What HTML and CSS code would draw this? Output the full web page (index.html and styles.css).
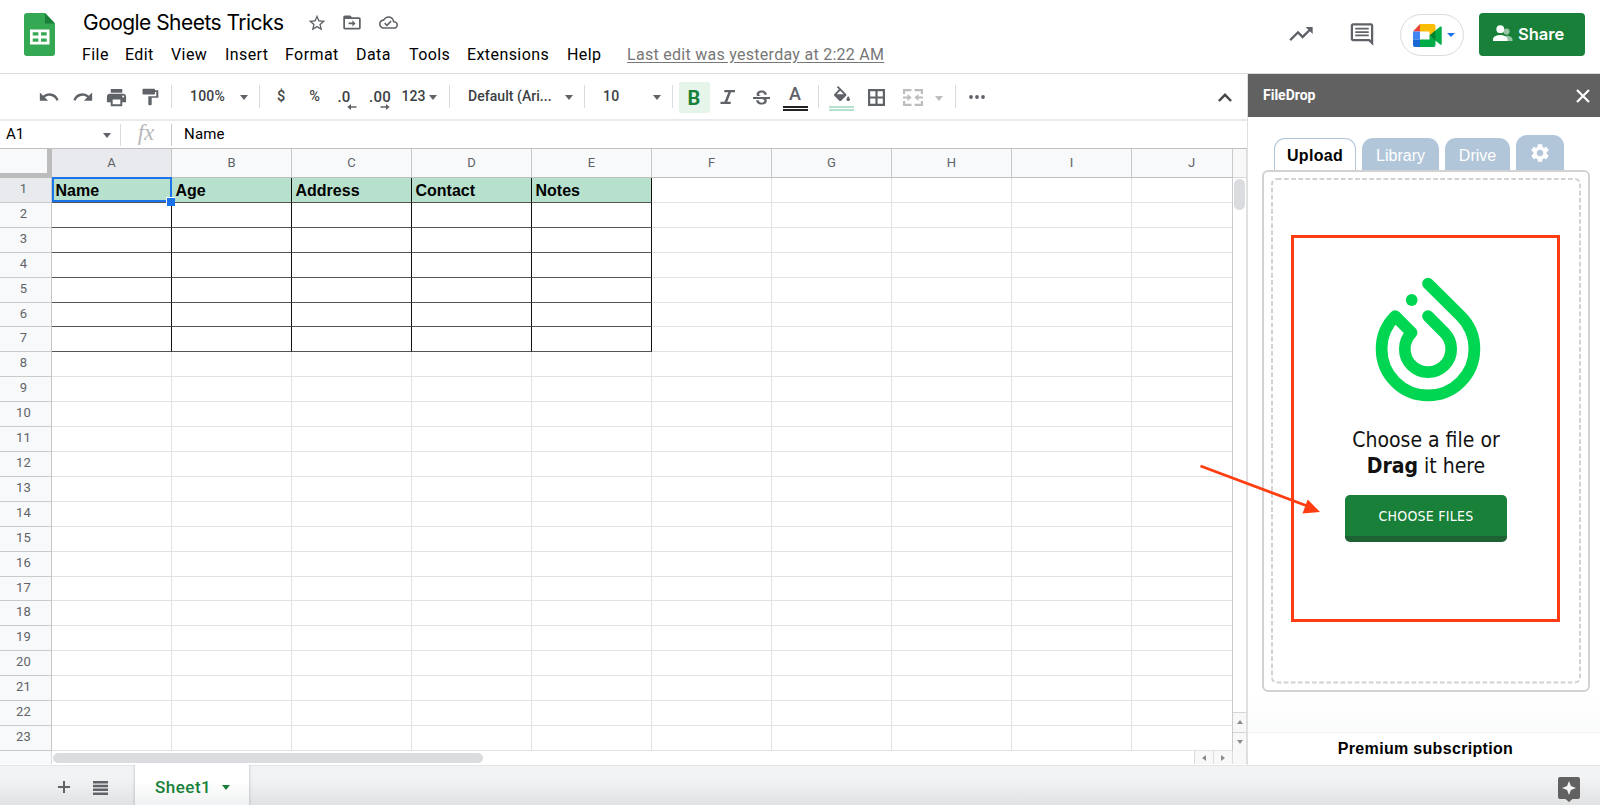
FILE: index.html
```html
<!DOCTYPE html>
<html lang="en">
<head>
<meta charset="utf-8">
<title>Google Sheets Tricks</title>
<link rel="stylesheet" href="styles.css">
</head>
<body>
<div class="app">
  <header class="top">
    <svg class="logo" viewBox="0 0 31 43" width="31" height="43">
      <path fill="#34a853" d="M3 0h18l10 10.500v29.500a3 3 0 0 1-3 3H3a3 3 0 0 1-3-3V3a3 3 0 0 1 3-3z"/>
      <path fill="#188038" d="M21 0l10 10.500H21z"/>
      <path fill="#fff" fill-rule="evenodd" d="M6 16.500h19.500v15H6zM8.700 19.200v3.400h5.700v-3.400zM17 19.200v3.400h5.700v-3.400zM8.700 25.400v3.400h5.700v-3.400zM17 25.400v3.400h5.700v-3.400z"/>
    </svg>
    <div class="titles">
      <div class="title-row">
        <span class="doc-title">Google Sheets Tricks</span>
        <svg class="star" viewBox="0 0 24 24" width="20" height="20"><path d="M22 9.240l-7.190-.62L12 2 9.190 8.630 2 9.240l5.460 4.730L5.820 21 12 17.270 18.180 21l-1.630-7.030L22 9.240zM12 15.400l-3.760 2.270 1-4.280-3.320-2.880 4.380-.38L12 6.100l1.710 4.040 4.380.38-3.320 2.880 1 4.280L12 15.400z"/></svg>
        <svg class="move" viewBox="0 0 24 24" width="22" height="21"><path d="M20 6h-8l-2-2H4c-1.100 0-2 .9-2 2v12c0 1.100.9 2 2 2h16c1.100 0 2-.9 2-2V8c0-1.100-.9-2-2-2zm0 12H4V8h16v10zm-7.500-1.500 3.500-3.500-3.500-3.500v2.600H8v1.800h4.500z"/></svg>
        <svg class="cloud" viewBox="0 0 24 24" width="19" height="19"><path d="M19.350 10.040C18.670 6.590 15.640 4 12 4 9.110 4 6.600 5.640 5.350 8.040 2.340 8.360 0 10.910 0 14c0 3.310 2.690 6 6 6h13c2.760 0 5-2.240 5-5 0-2.640-2.050-4.780-4.650-4.960zM19 18H6c-2.210 0-4-1.790-4-4 0-2.050 1.530-3.760 3.560-3.970l1.070-.11.5-.95C8.080 7.140 9.940 6 12 6c2.620 0 4.880 1.860 5.390 4.430l.3 1.500 1.530.11c1.560.1 2.780 1.410 2.780 2.960 0 1.650-1.350 3-3 3zm-9-3.820l-2.090-2.090L6.500 13.500 10 17l6.010-6.010-1.410-1.410z"/></svg>
      </div>
      <nav class="menu">
        <span class="m-file">File</span><span class="m-edit">Edit</span><span class="m-view">View</span><span class="m-insert">Insert</span><span class="m-format">Format</span><span class="m-data">Data</span><span class="m-tools">Tools</span><span class="m-ext">Extensions</span><span class="m-help">Help</span><span class="last-edit">Last edit was yesterday at 2:22 AM</span>
      </nav>
    </div>
    <div class="actions">
      <svg class="trend" viewBox="0 0 24 24" width="28" height="28"><path d="M16 6l2.290 2.290-4.880 4.880-4-4L2 16.590 3.410 18l6-6 4 4 6.300-6.290L22 12V6z"/></svg>
      <svg class="comment" viewBox="0 0 24 24" width="28" height="27"><path d="M21.990 4c0-1.100-.89-2-1.990-2H4c-1.100 0-2 .9-2 2v12c0 1.100.9 2 2 2h14l4 4-.01-18zM20 4v13.170L18.830 16H4V4h16zM6 12h12v1.600H6zm0-3h12v1.600H6zm0-3h12v1.600H6z"/></svg>
      <div class="meet">
        <svg viewBox="0 0 29 23" width="29" height="23">
          <path fill="#ea4335" d="M0 7.500L7 0v7.500z"/>
          <path fill="#4285f4" d="M0 7.500h7v8H0z"/>
          <path fill="#1967d2" d="M0 15.500h7V23H2a2 2 0 0 1-2-2z"/>
          <path fill="#fbbc04" d="M7 0h13.500a2 2 0 0 1 2 2v5l-6 4.500v-4H7z"/>
          <path fill="#00ac47" d="M7 15.500h9.500v-4l6 5V21a2 2 0 0 1-2 2H7z"/>
          <path fill="#00ac47" d="M22.500 6.500l4.700-3.900c.7-.5 1.500 0 1.500.8v16.400c0 .9-.9 1.300-1.500.8l-4.700-3.900-6-5.200z"/>
          <path fill="#00832d" d="M16.500 11.500l6-5v10z"/>
        </svg>
        <i class="caret blue"></i>
      </div>
      <div class="share">
        <svg viewBox="0 0 20 17" width="20" height="17">
          <g fill="#fff" opacity=".55"><circle cx="13.500" cy="6.500" r="3.100"/><path d="M13 10.500c3.500.3 6.500 1.800 6.500 4V16H14z"/></g>
          <g fill="#fff"><circle cx="7.300" cy="4.200" r="3.900"/><path d="M0 16v-1.800C0 11.200 4.800 10 7.300 10s7.200 1.200 7.200 4.200V16z"/></g>
        </svg>
        <span>Share</span>
      </div>
    </div>
  </header>

  <div class="body">
    <main class="editor">
      <div class="toolbar">
        <div class="tool"><svg viewBox="0 0 24 24" width="22" height="22"><path d="M12.500 8c-2.650 0-5.050.99-6.900 2.600L2 7v9h9l-3.620-3.620c1.390-1.160 3.160-1.880 5.120-1.880 3.540 0 6.550 2.310 7.600 5.500l2.370-.78C21.080 11.030 17.150 8 12.500 8z"/></svg></div>
        <div class="tool"><svg viewBox="0 0 24 24" width="22" height="22"><path d="M18.400 10.600C16.550 8.990 14.150 8 11.500 8c-4.650 0-8.580 3.030-9.960 7.220L3.900 16c1.050-3.190 4.050-5.500 7.600-5.500 1.950 0 3.730.72 5.120 1.880L13 16h9V7l-3.600 3.600z"/></svg></div>
        <div class="tool"><svg viewBox="0 0 24 24" width="23" height="23"><path d="M19 8H5c-1.660 0-3 1.340-3 3v6h4v4h12v-4h4v-6c0-1.660-1.340-3-3-3zm-3 11H8v-5h8v5zm3-7c-.55 0-1-.45-1-1s.45-1 1-1 1 .45 1 1-.45 1-1 1zm-1-9H6v4h12V3z"/></svg></div>
        <div class="tool"><svg viewBox="0 0 24 24" width="20" height="20"><path d="M18 4V3c0-.55-.45-1-1-1H4c-.55 0-1 .45-1 1v5c0 .55.45 1 1 1h13c.55 0 1-.45 1-1V6h1.500v5H10v10c0 .55.45 1 1 1h2c.55 0 1-.45 1-1v-8h8V4h-4z"/></svg></div>
        <div class="sep"></div>
        <div class="tool drop zoom"><span>100%</span><i class="caret"></i></div>
        <div class="sep"></div>
        <div class="tool glyph">$</div>
        <div class="tool glyph">%</div>
        <div class="tool dec"><span>.0</span><svg viewBox="0 0 10 6" width="10" height="6"><path d="M4 0v2.200h5.500v1.600H4V6L.3 3z"/></svg></div>
        <div class="tool dec wide"><span>.00</span><svg viewBox="0 0 10 6" width="10" height="6"><path d="M6 0v2.200H.5v1.600H6V6l3.700-3z"/></svg></div>
        <div class="tool num"><span>123</span><i class="caret"></i></div>
        <div class="sep"></div>
        <div class="tool drop font"><span>Default (Ari...</span><i class="caret"></i></div>
        <div class="sep"></div>
        <div class="tool drop size"><span>10</span><i class="caret"></i></div>
        <div class="sep"></div>
        <div class="tool"><b class="bold-on">B</b></div>
        <div class="tool"><svg viewBox="0 0 16 16" width="16" height="16"><path d="M4.300 1H15v2.300h-4L7.300 12.700h3.400V15H.5v-2.300h4L8.300 3.300h-4z"/></svg></div>
        <div class="tool"><svg viewBox="3 2 18 17" width="17" height="17"><path d="M6.850 7.080C6.850 4.370 9.450 3 12.240 3c1.640 0 3 .49 3.900 1.280.77.65 1.460 1.730 1.460 3.240h-2.600c0-.31-.05-.59-.15-.85-.29-.86-1.400-1.500-2.600-1.500-2.100 0-2.800 1.200-2.800 1.900 0 .48.25.88.74 1.210.4.270.8.500 1.400.72H7.390c-.21-.34-.54-.89-.54-1.920zM21 12v-1.900H3V12h9.620c1.400.45 2.400.75 2.400 1.970 0 1.300-1.100 2-2.700 2-1.800 0-3.300-.84-3.300-2.600H6.400c0 .55.08 1.130.24 1.580.81 2.290 3.290 3.050 5.670 3.050 2.270 0 5.300-.89 5.300-4.050 0-.3-.01-1.160-.48-1.950H21z"/></svg></div>
        <div class="tool color-tool"><span>A</span><i></i></div>
        <div class="sep"></div>
        <div class="tool color-tool fill"><svg viewBox="2 0 20 18" width="18" height="16"><path d="M16.560 8.940L7.620 0 6.210 1.410l2.380 2.380-5.150 5.150c-.59.59-.59 1.540 0 2.120l5.500 5.500c.29.29.68.44 1.060.44s.77-.15 1.060-.44l5.500-5.500c.59-.58.59-1.530 0-2.120zM6 9.200L10 5.210 14 9.200zM19 11.500s-2 2.170-2 3.500c0 1.100.9 2 2 2s2-.9 2-2c0-1.330-2-3.500-2-3.500z"/></svg><i></i></div>
        <div class="tool"><svg viewBox="0 0 17 17" width="17" height="17"><path fill-rule="evenodd" d="M0 0h17v17H0zM2.200 2.200v5.200h5.200V2.200zM9.600 2.200v5.200h5.200V2.200zM2.200 9.600v5.200h5.200V9.600zM9.600 9.600v5.200h5.200V9.600z"/></svg></div>
        <div class="tool merge"><svg viewBox="0 0 20 17" width="20" height="17"><path d="M0 0h8.500v2.200H2.200V5H0zM11.500 0H20v5h-2.200V2.200h-6.300zM0 12h2.200v2.800h6.300V17H0zM17.800 12H20v5h-8.500v-2.200h6.300zM0 7.500h4.500V5l4.200 3.500L4.500 12V9.500H0zM20 7.500h-4.500V5l-4.200 3.500 4.200 3.500V9.500H20z"/></svg><i class="caret"></i></div>
        <div class="sep"></div>
        <div class="tool"><svg viewBox="0 0 16 4" width="16" height="4"><circle cx="2" cy="2" r="1.900"/><circle cx="8" cy="2" r="1.900"/><circle cx="14" cy="2" r="1.900"/></svg></div>
        <div class="tool collapse"><svg viewBox="0 0 14 9" width="14" height="9"><path fill="none" stroke="#444746" stroke-width="2.400" d="M.9 8L7 1.800 13.100 8"/></svg></div>
      </div>

      <div class="formula">
        <div class="name-box"><span>A1</span><i class="caret"></i></div>
        <div class="fx">fx</div>
        <div class="value">Name</div>
      </div>

      <div class="sheet-wrap">
        <div class="sheet" id="sheet"></div>
        <div class="vscroll">
          <div class="v-head"></div>
          <div class="v-track"><div class="v-thumb"></div></div>
          <div class="v-btn"><i class="tri up"></i></div>
          <div class="v-btn"><i class="tri down"></i></div>
        </div>
      </div>
      <div class="hscroll">
        <div class="h-corner"></div>
        <div class="h-track"><div class="h-thumb"></div></div>
        <div class="h-btn"><i class="tri left"></i></div>
        <div class="h-btn"><i class="tri right"></i></div>
        <div class="h-end"></div>
      </div>
    </main>

    <aside class="side">
      <div class="side-head"><span>FileDrop</span><svg viewBox="0 0 14 14" width="14" height="14"><path stroke="#fff" stroke-width="2.200" d="M1 1l12 12M13 1L1 13"/></svg></div>
      <div class="side-body">
        <div class="tabs">
          <div class="tab on">Upload</div>
          <div class="tab lib">Library</div>
          <div class="tab drive">Drive</div>
          <div class="tab gear"><svg viewBox="0 0 24 24" width="22" height="22"><path fill="#fff" d="M19.140 12.940c.04-.3.060-.61.060-.94 0-.32-.02-.64-.07-.94l2.030-1.580c.18-.14.23-.41.12-.61l-1.920-3.320c-.12-.22-.37-.29-.59-.22l-2.390.96c-.5-.38-1.030-.7-1.620-.94l-.36-2.540c-.04-.24-.24-.41-.48-.41h-3.840c-.24 0-.43.17-.47.41l-.36 2.540c-.59.24-1.130.57-1.620.94l-2.390-.96c-.22-.08-.47 0-.59.22L2.740 8.870c-.12.21-.08.47.12.61l2.030 1.580c-.05.3-.09.63-.09.94s.02.64.07.94l-2.030 1.580c-.18.14-.23.41-.12.61l1.920 3.320c.12.22.37.29.59.22l2.390-.96c.5.38 1.030.7 1.620.94l.36 2.540c.05.24.24.41.48.41h3.840c.24 0 .44-.17.47-.41l.36-2.540c.59-.24 1.130-.56 1.620-.94l2.390.96c.22.08.47 0 .59-.22l1.920-3.320c.12-.22.07-.47-.12-.61l-2.010-1.580zM12 15.600c-1.980 0-3.600-1.620-3.600-3.600s1.620-3.600 3.600-3.600 3.600 1.620 3.600 3.600-1.620 3.600-3.600 3.600z"/></svg></div>
        </div>
        <div class="panel">
          <svg class="dash" width="310" height="506" viewBox="0 0 310 506"><rect x="1" y="1" width="308" height="503.500" rx="5" fill="none" stroke="#d2d2d2" stroke-width="2" stroke-dasharray="4.700 2.400"/></svg>
          <svg class="drop-logo" viewBox="-53 -72 106 125" width="106" height="125">
            <path fill="none" stroke="#00d652" stroke-width="11.700" stroke-linecap="round" stroke-linejoin="round" d="M0-65.400L32.800-32.800A46.400 46.400 0 1 1-32.800-32.800L-16.400-16.400A23.200 23.200 0 1 0 16.400-16.400L0-32.800"/>
            <circle cx="-16.300" cy="-49" r="5.900" fill="#00d652"/>
          </svg>
          <div class="hint">Choose a file or<br><b>Drag</b> it here</div>
          <div class="choose">CHOOSE FILES</div>
        </div>
      </div>
      <div class="premium">Premium subscription</div>
    </aside>
  </div>

  <footer class="bottom">
    <svg class="plus" viewBox="0 0 12 12" width="12" height="12"><path d="M5 0h2v5h5v2H7v5H5V7H0V5h5z"/></svg>
    <svg class="list" viewBox="0 0 15 14" width="15" height="14"><path d="M0 0h15v2.500H0zM0 3.800h15v2.500H0zM0 7.600h15v2.500H0zM0 11.400h15v2.500H0z"/></svg>
    <div class="sheet-tab"><span>Sheet1</span><i class="caret"></i></div>
    <svg class="explore" viewBox="0 0 22 25" width="22" height="25"><path fill="#616161" d="M2 0h18a2 2 0 0 1 2 2v18a2 2 0 0 1-2 2h-5.500L11 25l-3.500-3H2a2 2 0 0 1-2-2V2a2 2 0 0 1 2-2z"/><path fill="#f4f5f6" d="M11 4l1.900 5.100L18 11l-5.100 1.900L11 18l-1.900-5.100L4 11l5.100-1.900z"/></svg>
  </footer>

  <div class="callout-box"></div>
  <svg class="callout-arrow" viewBox="0 0 124 54" width="124" height="54"><path stroke="#ff3d12" stroke-width="2.700" d="M2.500 3L108 42.500"/><path fill="#ff3d12" d="M122 49L104.500 50.500l5.200-14z"/></svg>
</div>
<script src="sheet.js"></script>
</body>
</html>
```
FILE: styles.css
```css
* { box-sizing: border-box; }
body { margin: 0; background: #fff; font-family: Roboto, "Liberation Sans", sans-serif; color: #000; overflow: hidden; }
svg { display: block; fill: #5f6368; flex: none; }
.app { position: relative; width: 1600px; height: 805px; display: flex; flex-direction: column; }

.top { height: 74px; flex: none; display: flex; border-bottom: 1px solid #dadce0; }
.logo { margin: 13px 0 0 24px; }
.titles { margin-left: 27px; padding-top: 8px; }
.title-row { display: flex; align-items: center; height: 29px; padding-left: 1px; }
.doc-title { width: 224px; font: 21px/31px Inter, sans-serif; letter-spacing: -0.54px; white-space: nowrap; }
.move { margin-left: 14px; }
.cloud { margin-left: 16px; }
.menu { display: flex; height: 32px; line-height: 35px; font-size: 16px; letter-spacing: 0.42px; white-space: nowrap; }
.menu span { flex: none; }
.m-file { width: 43px; } .m-edit { width: 46px; } .m-view { width: 54px; } .m-insert { width: 60px; }
.m-format { width: 71px; } .m-data { width: 53px; } .m-tools { width: 58px; } .m-ext { width: 100px; } .m-help { width: 60px; }
.menu .last-edit { color: #777; text-decoration: underline; text-underline-offset: 2px; letter-spacing: 0.28px; }
.actions { margin-left: auto; display: flex; }
.trend { margin: 20px 33px 0 0; }
.comment { margin: 21px 24px 0 0; }
.meet { width: 64px; height: 42px; margin: 14px 15px 0 0; border: 1px solid #dadce0; border-radius: 21px; display: flex; align-items: center; padding-left: 12px; }
.share { width: 106px; height: 43px; margin: 13px 15px 0 0; border-radius: 4px; background: #188038; color: #fff; display: flex; align-items: center; padding: 0 0 2px 14px; font: 600 16.500px Inter, sans-serif; }
.share span { margin-left: 5px; }
.caret { display: block; width: 0; height: 0; border: 4.500px solid transparent; border-top: 5px solid #5f6368; border-bottom: 0; }
.caret.blue { border-top-color: #1a73e8; margin-left: 5px; border-width: 4px 4px 0; }

.body { height: 691px; flex: none; display: flex; }
.editor { width: 1247px; flex: none; }
.toolbar { height: 47px; padding-left: 32px; border-bottom: 2px solid #e8eaed; display: grid; align-items: center;
  grid-template-columns: 34px 34px 33px 34px 9px 79px 9px 34px 33px 33px 33px 48px 8px 127px 9px 79px 9px 34px 33px 34px 34px 13px 33px 37px 53px 14px 30px 1fr; color: #3c4043; font-size: 14px; }
.tool { height: 32px; display: flex; align-items: center; justify-content: center; padding-top: 1px; }
.sep { width: 1px; height: 23px; background: #dadce0; justify-self: center; }
.drop { justify-content: space-between; padding: 0 7px 2px 0; letter-spacing: 0.4px; font-weight: 500; }
.zoom { padding-left: 14px; letter-spacing: 0.2px; }
.font { padding-left: 15px; letter-spacing: 0.05px; }
.size { padding-left: 14px; }
.glyph { font-size: 14.500px; font-weight: 500; color: #444746; }
.tool.glyph { padding-top: 0; }
.dec { position: relative; font-size: 15px; font-weight: 500; padding: 0 7px 0 0; letter-spacing: 0.2px; }
.dec span + svg { position: absolute; right: 7px; bottom: 3px; }
.dec.wide { padding-right: 1px; }
.num { gap: 4px; font-weight: 500; padding: 0 3px 1px 0; }
.num .caret { margin-top: 3px; }
.drop .caret { margin-top: 4px; }
.bold-on { width: 31px; height: 31px; background: #e6f4ea; border-radius: 2px; color: #188038; font: 700 20px/33px Roboto, sans-serif; text-align: center; }
.color-tool { flex-direction: column; font: 500 18px/18px Roboto, sans-serif; color: #5f6368; gap: 3px; justify-content: flex-start; padding-top: 4px; }
.color-tool i { width: 25px; height: 5px; border: solid #222; border-width: 2px 0 2px; }
.color-tool.fill { gap: 4px; padding-top: 5px; }
.color-tool.fill i { border-color: #b7e1cd; }
.merge { gap: 12px; justify-content: flex-start; padding-left: 8px; }
.merge svg { fill: #bdbdbd; }
.merge .caret { border-top-color: #bdbdbd; margin-top: 2px; }
.collapse { justify-content: flex-end; padding-right: 15px; }

.formula { height: 28px; border-bottom: 1px solid #c0c0c0; display: flex; align-items: center; font-size: 15px; }
.name-box { width: 121px; height: 22px; border-right: 1px solid #dadce0; display: flex; align-items: center; justify-content: space-between; padding: 0 9px 1px 6px; }
.name-box .caret { margin-top: 3px; }
.fx { width: 51px; height: 22px; border-right: 1px solid #c4c7cb; text-align: center; font: italic 23px/18px "Liberation Serif", serif; color: #b8b8b8; }
.value { padding: 0 0 1px 12px; letter-spacing: 0.2px; }

.sheet-wrap { height: 602px; display: flex; }
.sheet { width: 1233px; flex: none; display: grid; grid-template-columns: 52px repeat(9, 120px) 1fr; grid-template-rows: 29px repeat(23, 24.920px); border-right: 1px solid #c8cacd; overflow: hidden; }
.cell { border-right: 1px solid #e1e2e3; border-bottom: 1px solid #e1e2e3; font: 700 16px/25px "Liberation Sans", Arial, sans-serif; padding-left: 3.500px; }
.cell.last { border-right: 0; }
.cell.data { border-bottom-color: #555; border-right-color: #111; }
.cell.title { background: #b7e1cd; }
.cell.active { position: relative; }
.cell.active::before { content: ""; position: absolute; inset: -1px -1px 0 0; border: 2px solid #1a73e8; }
.cell.active::after { content: ""; position: absolute; right: -4px; bottom: -4px; width: 8px; height: 8px; background: #1a73e8; border: solid #fff; border-width: 1px 0 0 1px; z-index: 1; }
.col, .rowh { background: #f8f9fa; border-right: 1px solid #c4c6c8; border-bottom: 1px solid #c9cbcd; color: #5f6368; text-align: center; font-size: 13px; }
.col { line-height: 28px; border-bottom-color: #c0c0c0; }
.col.last { text-align: left; padding-left: 56px; border-right: 0; }
.rowh { line-height: 22px; padding-right: 4px; letter-spacing: 0.1px; }
.sel { background: #e8eaed; }
.corner { background: #f8f9fa; border: solid #bcbcbc; border-width: 0 5px 5px 0; }

.vscroll { width: 14px; flex: none; display: flex; flex-direction: column; border-right: 1px solid #e0e0e0; }
.v-head { height: 29px; background: #f8f8f8; border-bottom: 1px solid #d5d5d5; }
.v-track { flex: 1; padding: 1px 1px; }
.v-thumb { height: 31px; border-radius: 6px; background: #dadce0; }
.v-btn { height: 19.500px; border-top: 1px solid #d4d6d9; background: #f8f8f8; display: flex; align-items: center; justify-content: center; }
.tri { width: 0; height: 0; border: 3px solid transparent; }
.up { border-bottom: 4px solid #8c8c8c; border-top: 0; }
.down { border-top: 4px solid #8c8c8c; border-bottom: 0; }
.left { border-right: 4px solid #8c8c8c; border-left: 0; }
.right { border-left: 4px solid #8c8c8c; border-right: 0; }
.hscroll { height: 14px; display: flex; border-top: 1px solid #d8dadc; margin-top: -1px; }
.h-corner { width: 52px; background: #f8f9fa; border-right: 1px solid #dadce0; }
.h-track { flex: 1; padding: 2px 0 0 1px; }
.h-thumb { width: 430px; height: 10px; border-radius: 5px; background: #dadce0; }
.h-btn { width: 19px; border-left: 1px solid #dadce0; background: #f8f8f8; display: flex; align-items: center; justify-content: center; }
.h-end { width: 15px; border: solid #dadce0; border-width: 0 1px; background: #f8f8f8; }

.side { flex: 1; border-left: 1px solid #e0e0e0; display: flex; flex-direction: column; }
.side-head { height: 43px; background: #616161; color: #fff; display: flex; align-items: center; justify-content: space-between; padding: 0 10px 0 15px; font: 700 14px Roboto, sans-serif; }
.side-head span { padding-bottom: 2px; }
.side-body { flex: 1; padding: 18px 10px 0 14px; background: linear-gradient(#fff 94%, #fafbfb); }
.tabs { height: 35px; display: flex; align-items: flex-end; padding-left: 12px; font: 16px/35px "Liberation Sans", Arial, sans-serif; }
.tab { height: 32px; border-radius: 11px 11px 0 0; background: #b2c6d9; color: #fff; text-align: center; margin-right: 6px; width: 77px; }
.tab.on { width: 82px; background: #fff; border: 1px solid #b2c6d9; border-bottom: 0; color: #000; font-weight: 700; letter-spacing: 0.3px; line-height: 34px; }
.tab.drive { width: 65px; }
.tab.gear { width: 48px; height: 35px; display: flex; align-items: center; justify-content: center; margin: 0; }
.panel { position: relative; height: 522px; border: 2px solid #d2d2d2; border-radius: 6px; display: flex; flex-direction: column; align-items: center; padding-top: 104.500px; }
.dash { position: absolute; left: 7px; top: 6px; }
.drop-logo { margin-left: 3px; }
.hint { margin-top: 25.500px; font: 21px/26px "DejaVu Sans Condensed", "DejaVu Sans", sans-serif; text-align: center; white-space: nowrap; letter-spacing: 0; color: #111; }
.choose { margin-top: 16px; width: 162px; height: 47px; border-radius: 5px; background: #188038; border-bottom: 6px solid #1e6233; color: #fff; text-align: center; font: 14px/42px "DejaVu Sans Condensed", "DejaVu Sans", sans-serif; letter-spacing: 0.25px; }
.premium { height: 33px; padding-left: 3px; border-top: 1px solid #f1f1f1; text-align: center; font: 700 16px/32px "Liberation Sans", Arial, sans-serif; letter-spacing: 0.32px; }

.bottom { height: 40px; flex: none; display: flex; border-top: 1px solid #e3e5e7; background: linear-gradient(#f1f3f4 30%, #e0e2e4); }
.plus { margin: 15px 0 0 57.500px; }
.list { margin: 15px 0 0 23.500px; }
.sheet-tab { width: 114px; margin: -1px 0 0 27px; background: linear-gradient(#fff 40%, #f0f1f2); box-shadow: 0 0 3px rgba(0,0,0,.25); clip-path: inset(0 -4px 0 -4px); display: flex; align-items: center; padding: 4px 0 0 20px; color: #188038; font: 500 17px Roboto, sans-serif; letter-spacing: 0.5px; }
.sheet-tab .caret { border-top-color: #188038; margin-left: 11px; }
.explore { margin: 11px 20px 0 auto; }

.callout-box { position: absolute; left: 1291px; top: 235px; width: 269px; height: 387px; border: 3px solid #ff3d12; }
.callout-arrow { position: absolute; left: 1198px; top: 463px; }
```
FILE: sheet.js
```js
const sheet = document.getElementById('sheet');
const titles = ['Name', 'Age', 'Address', 'Contact', 'Notes'];

function add(className, text) {
  const el = document.createElement('div');
  el.className = className;
  el.textContent = text || '';
  sheet.appendChild(el);
}

add('corner');
'ABCDEFGHIJ'.split('').forEach((letter, c) => {
  add('col' + (c === 0 ? ' sel' : '') + (c === 9 ? ' last' : ''), letter);
});

for (let r = 1; r <= 23; r++) {
  add('rowh' + (r === 1 ? ' sel' : ''), String(r));
  for (let c = 0; c < 10; c++) {
    let cls = 'cell';
    if (c === 9) cls += ' last';
    if (c < 5 && r <= 7) cls += ' data';
    if (c < 5 && r === 1) cls += ' title';
    if (c === 0 && r === 1) cls += ' active';
    add(cls, r === 1 ? titles[c] : '');
  }
}
```
